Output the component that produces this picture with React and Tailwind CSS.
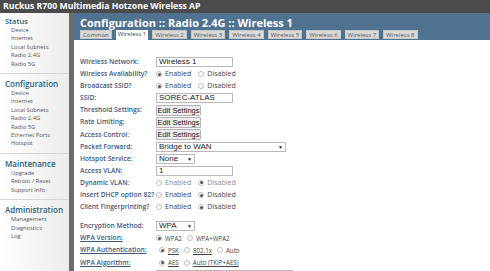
import React from "react";

const sideMenu = [
  { title: "Status", items: ["Device", "Internet", "Local Subnets", "Radio 2.4G", "Radio 5G"] },
  { title: "Configuration", items: ["Device", "Internet", "Local Subnets", "Radio 2.4G", "Radio 5G", "Ethernet Ports", "Hotspot"] },
  { title: "Maintenance", items: ["Upgrade", "Reboot / Reset", "Support Info"] },
  { title: "Administration", items: ["Management", "Diagnostics", "Log"] },
];

const tabs = ["Common", "Wireless 1", "Wireless 2", "Wireless 3", "Wireless 4", "Wireless 5", "Wireless 6", "Wireless 7", "Wireless 8"];

function Radio({ checked, label, dim, underline, small }) {
  return (
    <span className={`flex items-center gap-[3px] whitespace-nowrap ${dim ? "text-[#8a8a8a]" : "text-[#444]"} ${small ? "text-[6.2px]" : "text-[7px]"}`}>
      <span className="w-[6px] h-[6px] rounded-full border border-[#bdbdbd] bg-white flex items-center justify-center">
        {checked && <span className="w-[3px] h-[3px] rounded-full bg-[#555]" />}
      </span>
      <span className={underline ? "underline" : ""}>{label}</span>
    </span>
  );
}

function Input({ value, w = "w-[77px]" }) {
  return (
    <div className={`${w} h-[10px] border border-[#b9b9b9] bg-white text-[8px] leading-[8px] px-[2px] text-[#222] font-['Liberation_Sans']`}>
      {value}
    </div>
  );
}

function Select({ value, w }) {
  return (
    <div className={`${w} h-[10px] border border-[#b9b9b9] bg-white text-[8px] leading-[8px] px-[2px] text-[#222] flex justify-between items-center font-['Liberation_Sans']`}>
      <span>{value}</span>
      <span className="text-[5px]">▼</span>
    </div>
  );
}

function EditBtn() {
  return (
    <div className="w-[45px] h-[11px] border border-[#b3b3b3] bg-[#ececec] rounded-[1px] text-[7.5px] leading-[9px] text-center whitespace-nowrap text-[#222] font-['Liberation_Sans']">
      Edit Settings
    </div>
  );
}

function Row({ label, underline, children }) {
  return (
    <div className="flex items-center h-[12.1px]">
      <div className={`w-[76px] shrink-0 text-[6.7px] font-semibold text-[#40587a] whitespace-nowrap ${underline ? "underline" : ""}`}>{label}</div>
      <div className="flex items-center gap-[7px]">{children}</div>
    </div>
  );
}

export default function App() {
  return (
    <div className="w-[490px] h-[271px] overflow-hidden bg-white font-['Open_Sans',sans-serif] flex flex-col">
      <div className="h-[13px] shrink-0 bg-[#4b4b4b] text-white font-bold text-[8.7px] leading-[13px] pl-[3px] whitespace-nowrap">
        Ruckus R700 Multimedia Hotzone Wireless AP
      </div>
      <div className="flex flex-1 min-h-0">
        {/* Sidebar */}
        <div className="w-[74px] shrink-0 bg-gradient-to-r from-white to-[#ebebeb] border-r-[5px] border-[#6b6b6b] pt-[3px]">
          {sideMenu.map((s, i) => (
            <div key={s.title} className={i > 0 ? "border-t border-[#d7d7d7] mt-[5px] pt-[4px]" : ""}>
              <div className={`pl-[5px] font-semibold text-[#2a5d7c] ${i === 0 ? "text-[7.5px] leading-[10px]" : "text-[8px] leading-[11px]"}`}>{s.title}</div>
              {s.items.map((it) => (
                <div key={it} className="pl-[11px] text-[5.8px] leading-[8.4px] text-[#555] whitespace-nowrap">{it}</div>
              ))}
            </div>
          ))}
        </div>
        {/* Main */}
        <div className="flex-1 flex flex-col min-w-0">
          <div className="h-[27px] shrink-0 bg-[#4f7290] pl-[6px] flex flex-col justify-between">
            <div className="text-white font-bold text-[11px] leading-[15px] pt-[2px] whitespace-nowrap">
              Configuration :: Radio 2.4G :: Wireless 1
            </div>
            <div className="flex gap-[4px] items-end">
              {tabs.map((t, i) => (
                <div
                  key={t}
                  className={`px-[2px] text-[6px] leading-[8px] whitespace-nowrap ${
                    i === 1 ? "bg-white h-[10px] text-[#444]" : "bg-[#d9d9d9] h-[9px] mb-[1px] text-[#555] border border-[#c6c6c6]"
                  }`}
                >
                  {t}
                </div>
              ))}
            </div>
          </div>
          <div className="pl-[6px] pt-[16px]">
            <Row label="Wireless Network:"><Input value="Wireless 1" /></Row>
            <Row label="Wireless Availability?"><Radio checked label="Enabled" /><Radio label="Disabled" /></Row>
            <Row label="Broadcast SSID?"><Radio checked label="Enabled" /><Radio label="Disabled" /></Row>
            <Row label="SSID:"><Input value="SOREC-ATLAS" /></Row>
            <Row label="Threshold Settings:"><EditBtn /></Row>
            <Row label="Rate Limiting:"><EditBtn /></Row>
            <Row label="Access Control:"><EditBtn /></Row>
            <Row label="Packet Forward:"><Select value="Bridge to WAN" w="w-[130px]" /></Row>
            <Row label="Hotspot Service:"><Select value="None" w="w-[39px]" /></Row>
            <Row label="Access VLAN:"><Input value="1" /></Row>
            <Row label="Dynamic VLAN:"><Radio dim label="Enabled" /><Radio dim checked label="Disabled" /></Row>
            <Row label="Insert DHCP option 82?"><Radio label="Enabled" /><Radio checked label="Disabled" /></Row>
            <Row label="Client Fingerprinting?"><Radio label="Enabled" /><Radio checked label="Disabled" /></Row>
            <div className="h-[7px]" />
            <Row label="Encryption Method:"><Select value="WPA" w="w-[39px]" /></Row>
            <Row label="WPA Version:" underline>
              <span className="flex gap-[5px]">
                <Radio small checked label="WPA2" /><Radio small label="WPA+WPA2" />
              </span>
            </Row>
            <Row label="WPA Authentication:" underline>
              <span className="pl-[3px] flex gap-[5px]">
                <Radio small checked label="PSK" underline /><Radio small label="802.1x" underline /><Radio small label="Auto" />
              </span>
            </Row>
            <Row label="WPA Algorithm:" underline>
              <span className="pl-[3px] flex gap-[5px]">
                <Radio small checked label="AES" underline /><Radio small label="Auto (TKIP+AES)" underline />
              </span>
            </Row>
            <Row label=""><Input value="" w="w-[137px]" /></Row>
          </div>
        </div>
      </div>
    </div>
  );
}
